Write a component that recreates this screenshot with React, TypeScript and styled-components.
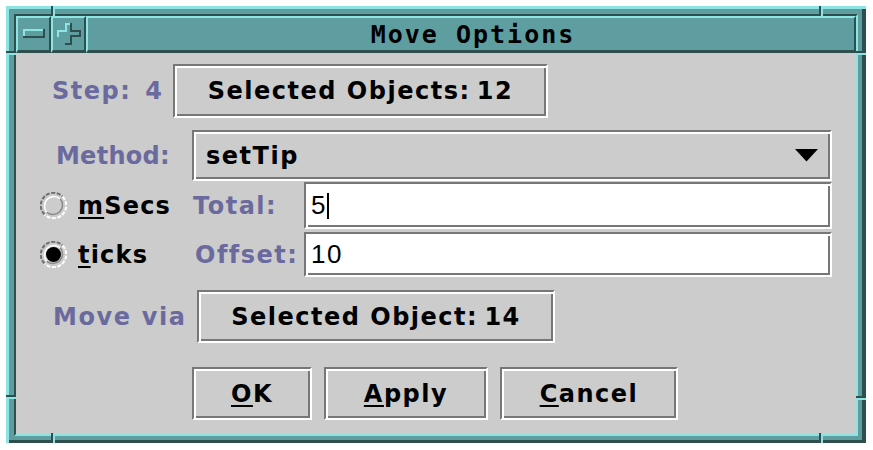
import React from "react";
import styled, { createGlobalStyle } from "styled-components";

const LIGHT = "#8ee4e2";
const MID = "#5f9ea0";
const DARK = "#2f4f4f";
const BG = "#cccccc";
const SH_DARK = "#777777";
const LABEL = "#6a6a9e";

const Global = createGlobalStyle`
  html, body { margin: 0; padding: 0; background: #ffffff; }
  body { font-family: "DejaVu Sans", sans-serif; }
`;

const Page = styled.div`
  padding: 6px 0 0 6px;
`;

const Frame = styled.div`
  position: relative;
  box-sizing: border-box;
  width: 860px;
  height: 437px;
  padding: 8px 8px 7px 8px;
  background: ${MID};
  box-shadow: inset 3px 3px 0 ${LIGHT}, inset -4px -3px 0 ${DARK};
`;

const Notch = styled.div<{ $v?: boolean }>`
  position: absolute;
  background: ${DARK};
  ${(p) =>
    p.$v
      ? `width: 2px; height: 10px; box-shadow: 2px 0 0 ${LIGHT};`
      : `height: 2px; width: 10px; box-shadow: 0 2px 0 ${LIGHT};`}
`;

const Well = styled.div`
  box-sizing: border-box;
  height: 100%;
  display: flex;
  flex-direction: column;
  border: 2px solid;
  border-color: ${DARK} ${LIGHT} ${LIGHT} ${DARK};
`;

const TitleRow = styled.div`
  display: flex;
  height: 37px;
  flex: none;
`;

const TitlePart = styled.div<{ $w?: number }>`
  box-sizing: border-box;
  ${(p) => (p.$w ? `width: ${p.$w}px; flex: none;` : `flex: 1;`)}
  height: 100%;
  background: ${MID};
  border-style: solid;
  border-width: 2px 2px 3px 2px;
  border-color: ${LIGHT} ${DARK} ${DARK} ${LIGHT};
  display: flex;
  align-items: center;
  justify-content: center;
`;

const TitleText = styled.span`
  font-family: "DejaVu Sans Mono", monospace;
  font-weight: bold;
  font-size: 25px;
  letter-spacing: 2px;
  color: #000;
  margin-left: 4px;
`;

const Content = styled.div`
  flex: 1;
  background: ${BG};
  display: flex;
  flex-direction: column;
  padding-top: 11px;
`;

const Row = styled.div<{ $h: number; $mt: number; $pl?: number; $gap?: number }>`
  display: flex;
  align-items: center;
  height: ${(p) => p.$h}px;
  margin-top: ${(p) => p.$mt}px;
  padding-left: ${(p) => p.$pl ?? 0}px;
  gap: ${(p) => p.$gap ?? 0}px;
  flex: none;
`;

const Label = styled.div<{ $w: number; $pl?: number; $right?: number; $ls?: number }>`
  box-sizing: border-box;
  width: ${(p) => p.$w}px;
  flex: none;
  padding-left: ${(p) => p.$pl ?? 0}px;
  padding-right: ${(p) => p.$right ?? 0}px;
  text-align: ${(p) => (p.$right !== undefined ? "right" : "left")};
  color: ${LABEL};
  font-family: "DejaVu Sans", sans-serif;
  font-weight: bold;
  font-size: 24px;
  letter-spacing: ${(p) => p.$ls ?? 1}px;
  white-space: pre;
`;

const Gap = styled.span<{ $w: number }>`
  display: inline-block;
  width: ${(p) => p.$w}px;
`;

const etched = `
  box-sizing: border-box;
  border: 2px solid;
  border-color: ${SH_DARK} #ffffff #ffffff ${SH_DARK};
  box-shadow: inset 2px 2px 0 #ffffff, inset -2px -2px 0 ${SH_DARK};
`;

const Button = styled.div<{ $w: number }>`
  ${etched}
  width: ${(p) => p.$w}px;
  height: 100%;
  flex: none;
  background: ${BG};
  display: flex;
  align-items: center;
  justify-content: center;
  font-family: "DejaVu Sans", sans-serif;
  font-weight: bold;
  font-size: 24px;
  letter-spacing: 1.5px;
  color: #000;
  white-space: pre;
`;

const Dropdown = styled.div`
  ${etched}
  width: 640px;
  height: 100%;
  flex: none;
  background: ${BG};
  display: flex;
  align-items: center;
  justify-content: space-between;
  padding: 0 12px 0 12px;
  font-family: "DejaVu Sans", sans-serif;
  font-weight: bold;
  font-size: 24px;
  letter-spacing: 1.5px;
  color: #000;
`;

const Field = styled.div`
  ${etched}
  width: 528px;
  height: 100%;
  flex: none;
  background: #ffffff;
  display: flex;
  align-items: center;
  padding-left: 5px;
  font-family: "Liberation Sans", sans-serif;
  font-size: 26px;
  letter-spacing: 1.5px;
  color: #000;
`;

const Caret = styled.span`
  display: inline-block;
  width: 2px;
  height: 26px;
  background: #000;
`;

const RadioCell = styled.div`
  box-sizing: border-box;
  width: 177px;
  flex: none;
  padding-left: 24px;
  display: flex;
  align-items: center;
  gap: 11px;
  font-family: "DejaVu Sans", sans-serif;
  font-weight: bold;
  font-size: 24px;
  letter-spacing: 1.2px;
  color: #000;
`;

const Mn = styled.span`
  text-decoration: underline;
  text-decoration-thickness: 2px;
  text-underline-offset: 3px;
`;

const Radio = ({ on }: { on?: boolean }) => (
  <svg width="27" height="27" viewBox="0 0 27 27">
    <path d="M4.5 22.5 A12.5 12.5 0 0 1 22.5 4.5" fill="none" stroke="#6f6f6f" strokeWidth="2" strokeDasharray="4 1.5" />
    <path d="M22.5 4.5 A12.5 12.5 0 0 1 4.5 22.5" fill="none" stroke="#fff" strokeWidth="2" strokeDasharray="4 1.5" />
    <path d="M6.8 20.2 A9.5 9.5 0 0 1 20.2 6.8" fill="none" stroke="#fff" strokeWidth="1.5" />
    <path d="M20.2 6.8 A9.5 9.5 0 0 1 6.8 20.2" fill="none" stroke="#8a8a8a" strokeWidth="1.5" />
    {on && <circle cx="13.5" cy="13.5" r="7.5" fill="#000" />}
  </svg>
);

const Arrow = () => (
  <svg width="23" height="13" viewBox="0 0 23 13">
    <polygon points="0,0 23,0 11.5,12.5" fill="#000" />
  </svg>
);

const MinGlyph = () => (
  <svg width="22" height="10" viewBox="0 0 22 10">
    <rect x="0" y="0" width="22" height="9" fill={MID} />
    <path d="M0 0 H22 V2 H2 V9 H0 Z" fill={LIGHT} />
    <path d="M22 0 V9 H0 V7 H20 V0 Z" fill={DARK} />
  </svg>
);

const MaxGlyph = () => (
  <svg width="24" height="22" viewBox="0 0 24 22">
    <path d="M8 0 H15 V7 H24 V14 H15 V22 H8 V14 H0 V7 H8 Z" fill={MID} />
    <path d="M8 0 H15 V2 H10 V9 H2 V14 H0 V7 H8 Z" fill={LIGHT} />
    <path d="M15 0 V7 H24 V14 H15 V22 H8 V20 H13 V12 H22 V9 H13 V0 Z" fill={DARK} />
  </svg>
);

export default function App() {
  return (
    <Page>
      <Global />
      <Frame>
        <Notch $v style={{ left: 45, top: 0 }} />
        <Notch $v style={{ left: 813, top: 0 }} />
        <Notch $v style={{ left: 45, bottom: 0 }} />
        <Notch $v style={{ left: 813, bottom: 0 }} />
        <Notch style={{ left: 0, top: 45 }} />
        <Notch style={{ right: 0, top: 45 }} />
        <Notch style={{ left: 0, top: 389 }} />
        <Notch style={{ right: 0, top: 390 }} />
        <Well>
          <TitleRow>
            <TitlePart $w={35}>
              <MinGlyph />
            </TitlePart>
            <TitlePart $w={35}>
              <MaxGlyph />
            </TitlePart>
            <TitlePart>
              <TitleText>Move Options</TitleText>
            </TitlePart>
          </TitleRow>
          <Content>
            <Row $h={54} $mt={0}>
              <Label $w={157} $pl={36} $ls={1.5}>
                Step:<Gap $w={14} />4
              </Label>
              <Button $w={375}>Selected Objects:{"\u2009"}12</Button>
            </Row>
            <Row $h={51} $mt={12}>
              <Label $w={176} $right={22} $ls={0.3}>Method:</Label>
              <Dropdown>
                <span>setTip</span>
                <Arrow />
              </Dropdown>
            </Row>
            <Row $h={47} $mt={1}>
              <RadioCell>
                <Radio />
                <span>
                  <Mn>m</Mn>Secs
                </span>
              </RadioCell>
              <Label $w={111} $ls={1.5}>Total:</Label>
              <Field>
                5<Caret />
              </Field>
            </Row>
            <Row $h={45} $mt={3}>
              <RadioCell>
                <Radio on />
                <span>
                  <Mn>t</Mn>icks
                </span>
              </RadioCell>
              <Label $w={111} $pl={2} $ls={1.5}>Offset:</Label>
              <Field>10</Field>
            </Row>
            <Row $h={53} $mt={13}>
              <Label $w={181} $pl={37} $ls={1.6}>Move via</Label>
              <Button $w={358}>Selected Object:{"\u2009"}14</Button>
            </Row>
            <Row $h={53} $mt={24} $pl={176} $gap={12}>
              <Button $w={120}>
                <span>
                  <Mn>O</Mn>K
                </span>
              </Button>
              <Button $w={164}>
                <span>
                  <Mn>A</Mn>pply
                </span>
              </Button>
              <Button $w={178}>
                <span>
                  <Mn>C</Mn>ancel
                </span>
              </Button>
            </Row>
          </Content>
        </Well>
      </Frame>
    </Page>
  );
}
